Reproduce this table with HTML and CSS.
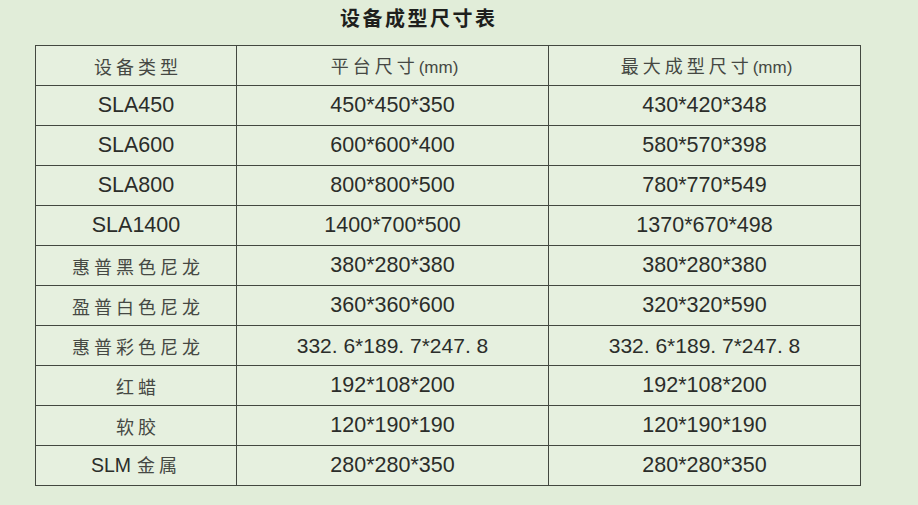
FILE: index.html
```html
<!DOCTYPE html>
<html lang="zh-CN">
<head>
<meta charset="utf-8">
<title>设备成型尺寸表</title>
<link rel="stylesheet" href="styles.css">
</head>
<body>
<div class="page">
  <h1 class="title">设备成型尺寸表</h1>
  <table class="sizes">
    <colgroup>
      <col class="c1"><col class="c2"><col class="c3">
    </colgroup>
    <thead>
      <tr><th class="cn">设备类型</th><th class="cn">平台尺寸<span class="unit">(mm)</span></th><th class="cn">最大成型尺寸<span class="unit">(mm)</span></th></tr>
    </thead>
    <tbody>
      <tr><td>SLA450</td><td>450*450*350</td><td>430*420*348</td></tr>
      <tr><td>SLA600</td><td>600*600*400</td><td>580*570*398</td></tr>
      <tr><td>SLA800</td><td>800*800*500</td><td>780*770*549</td></tr>
      <tr><td>SLA1400</td><td>1400*700*500</td><td>1370*670*498</td></tr>
      <tr><td class="cn">惠普黑色尼龙</td><td>380*280*380</td><td>380*280*380</td></tr>
      <tr><td class="cn">盈普白色尼龙</td><td>360*360*600</td><td>320*320*590</td></tr>
      <tr><td class="cn">惠普彩色尼龙</td><td class="dec">332. 6*189. 7*247. 8</td><td class="dec">332. 6*189. 7*247. 8</td></tr>
      <tr><td class="cn">红蜡</td><td>192*108*200</td><td>192*108*200</td></tr>
      <tr><td class="cn">软胶</td><td>120*190*190</td><td>120*190*190</td></tr>
      <tr><td><span class="slm">SLM</span> <span class="cnin">金属</span></td><td>280*280*350</td><td>280*280*350</td></tr>
    </tbody>
  </table>
</div>
</body>
</html>
```

FILE: styles.css
```css
html, body {
  margin: 0;
  padding: 0;
  background: #e1edd9;
}
.page {
  width: 918px;
  height: 505px;
  padding: 0 0 0 35px;
  box-sizing: border-box;
  font-family: "Liberation Sans", Arial, "Noto Sans CJK SC", sans-serif;
  color: #2b2d2a;
}
.title {
  margin: 0 0 9px 305px;
  height: 36px;
  line-height: 36px;
  font-family: "Noto Sans CJK SC", sans-serif;
  font-weight: 700;
  font-size: 20px;
  letter-spacing: 2.5px;
  color: #1e1f1d;
}
.sizes {
  border-collapse: collapse;
  width: 825px;
  table-layout: fixed;
  background: #e6f0df;
}
.c1 { width: 201px; }
.c2 { width: 312px; }
.c3 { width: 312px; }
.sizes th, .sizes td {
  border: 1.5px solid #434840;
  height: 40px;
  padding: 0;
  box-sizing: border-box;
  text-align: center;
  vertical-align: middle;
  font-size: 21.5px;
  font-weight: 400;
  line-height: 1;
  white-space: pre;
}
.sizes td.dec {
  font-family: "Liberation Sans", Arial, sans-serif;
  font-size: 21px;
  letter-spacing: 0;
}
.sizes .cn, .cnin {
  font-family: "Noto Sans CJK SC", sans-serif;
  font-size: 18px;
  letter-spacing: 4px;
  color: #454843;
  padding-left: 4px;
}
.sizes th.cn { font-size: 18px; }
.unit {
  font-family: "Liberation Sans Narrow", "Liberation Sans", sans-serif;
  letter-spacing: 0;
  font-size: 17px;
}
.cnin { padding-left: 0; }
.slm {
  font-family: "Liberation Sans", sans-serif;
  font-size: 19.5px;
  color: #2b2d2a;
}
```
